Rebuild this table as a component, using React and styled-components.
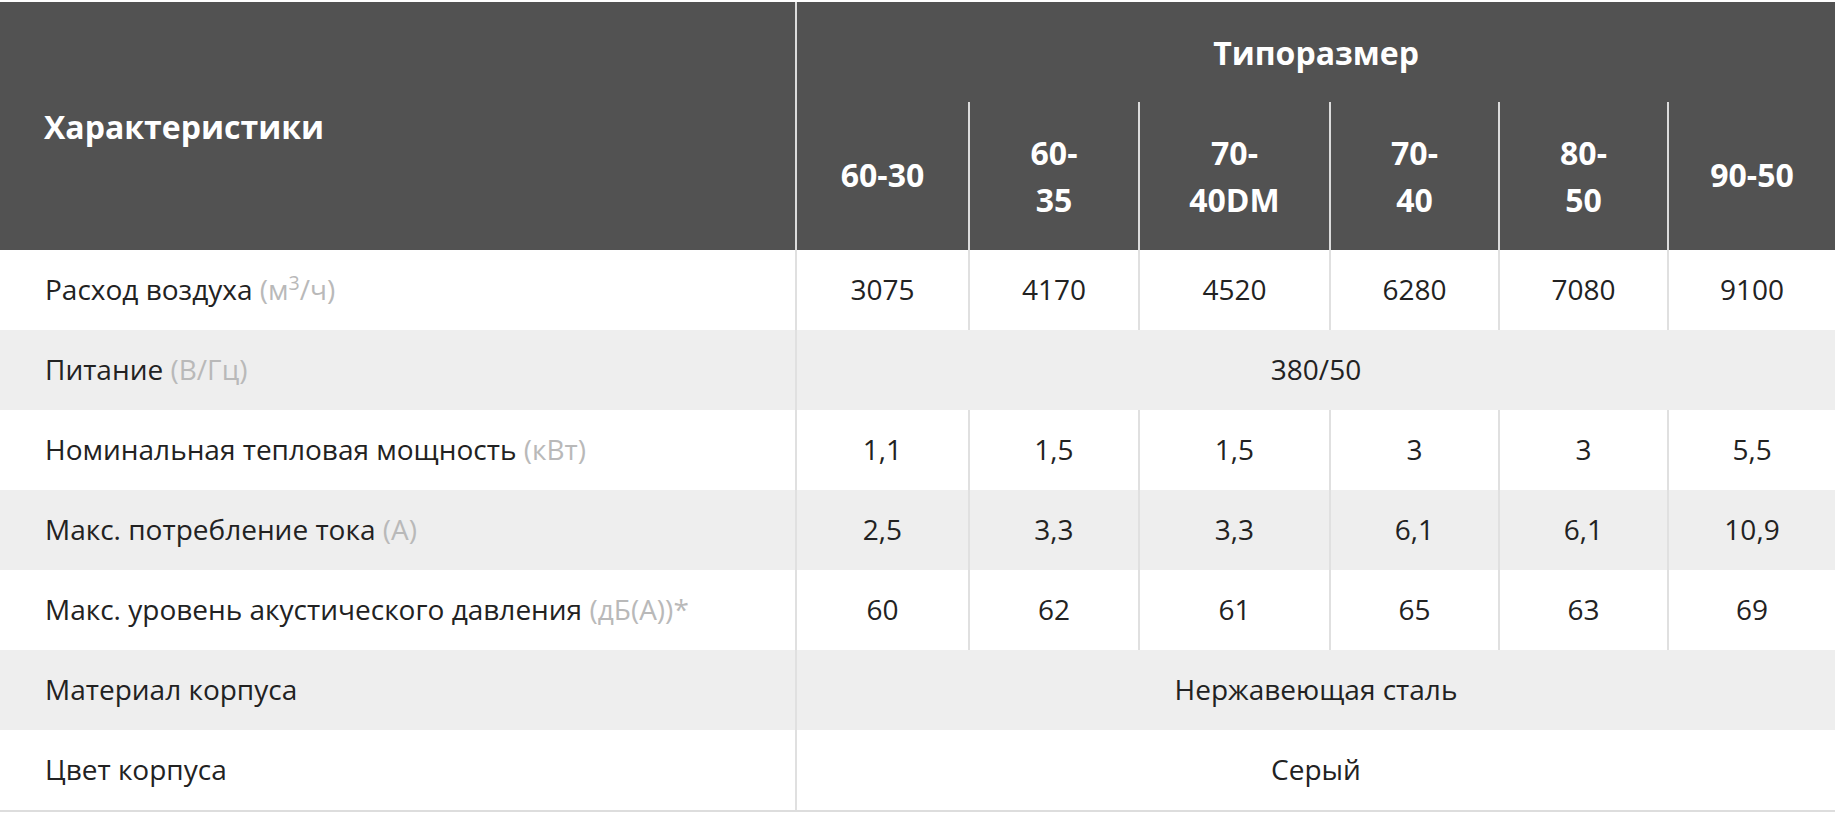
import styled, { createGlobalStyle } from "styled-components"

const GlobalStyle = createGlobalStyle`
    html, body {
        margin: 0;
        padding: 0;
        background: #fff;
    }
    body {
        font-family: "Open Sans", "Liberation Sans", sans-serif;
        color: #222;
    }
`

const sizes = ["60-30", "60-35", "70-40DM", "70-40", "80-50", "90-50"]
const headerLabels = [["60-30"], ["60-", "35"], ["70-", "40DM"], ["70-", "40"], ["80-", "50"], ["90-50"]]
const colWidths = [795, 173, 170, 191, 169, 169, 168]

const rows = [
    { name: "Расход воздуха", unit: <>(м<sup>3</sup>/ч)</>, values: ["3075", "4170", "4520", "6280", "7080", "9100"] },
    { name: "Питание", unit: "(В/Гц)", merged: "380/50" },
    { name: "Номинальная тепловая мощность", unit: "(кВт)", values: ["1,1", "1,5", "1,5", "3", "3", "5,5"] },
    { name: "Макс. потребление тока", unit: "(А)", values: ["2,5", "3,3", "3,3", "6,1", "6,1", "10,9"] },
    { name: "Макс. уровень акустического давления", unit: "(дБ(А))*", values: ["60", "62", "61", "65", "63", "69"] },
    { name: "Материал корпуса", merged: "Нержавеющая сталь" },
    { name: "Цвет корпуса", merged: "Серый" },
]

export default function App(){
    return(
        <>
            <GlobalStyle/>
            <Wrap>
                <SpecTable>
                    <colgroup>
                        {colWidths.map((w, i) => <col key={i} style={{width: w}}/>)}
                    </colgroup>
                    <thead>
                        <tr className="topRow">
                            <HeadCell rowSpan={2} $left>Характеристики</HeadCell>
                            <HeadCell colSpan={sizes.length} $divider>Типоразмер</HeadCell>
                        </tr>
                        <tr className="sizeRow">
                            {headerLabels.map((lines, i) => (
                                <HeadCell key={i} $divider $lift={lines.length === 1}>
                                    {lines.map((line, j) => (
                                        <span key={j}>{line}{j < lines.length - 1 && <br/>}</span>
                                    ))}
                                </HeadCell>
                            ))}
                        </tr>
                    </thead>
                    <tbody>
                        {rows.map((row, i) => (
                            <BodyRow key={i} $striped={i % 2 === 1}>
                                <NameCell>
                                    {row.name}
                                    {row.unit && <Unit> {row.unit}</Unit>}
                                </NameCell>
                                {row.merged
                                    ? <ValueCell colSpan={sizes.length}>{row.merged}</ValueCell>
                                    : row.values.map((v, j) => <ValueCell key={j}>{v}</ValueCell>)}
                            </BodyRow>
                        ))}
                    </tbody>
                </SpecTable>
            </Wrap>
        </>
    )
}

const Wrap = styled.div`
    width: 1835px;
    padding-top: 2px;
`
const SpecTable = styled.table`
    width: 1835px;
    table-layout: fixed;
    border-collapse: separate;
    border-spacing: 0;
    border-bottom: 2px solid #dddddd;
    .topRow{
        height: 100px;
    }
    .sizeRow{
        height: 148px;
    }
`
const HeadCell = styled.th`
    background: #525252;
    color: #fff;
    font-size: 32px;
    font-weight: 700;
    line-height: 47px;
    padding: 0 ${p => p.$left ? "44px" : "0"};
    padding-bottom: ${p => p.$lift ? "4px" : "0"};
    text-align: ${p => p.$left ? "left" : "center"};
    vertical-align: middle;
    border-left: ${p => p.$divider ? "2px solid #dcdcdc" : "none"};
`
const BodyRow = styled.tr`
    height: 80px;
    background: ${p => p.$striped ? "#eeeeee" : "#ffffff"};
`
const NameCell = styled.td`
    padding: 0 0 3px 45px;
    font-size: 28px;
    color: #222;
    white-space: nowrap;
    vertical-align: middle;
`
const Unit = styled.span`
    color: #b9b9b9;
    sup{
        font-size: 0.7em;
        line-height: 0;
    }
`
const ValueCell = styled.td`
    padding: 0 0 3px;
    font-size: 28px;
    color: #222;
    text-align: center;
    vertical-align: middle;
    border-left: 2px solid #e0e0e0;
`
